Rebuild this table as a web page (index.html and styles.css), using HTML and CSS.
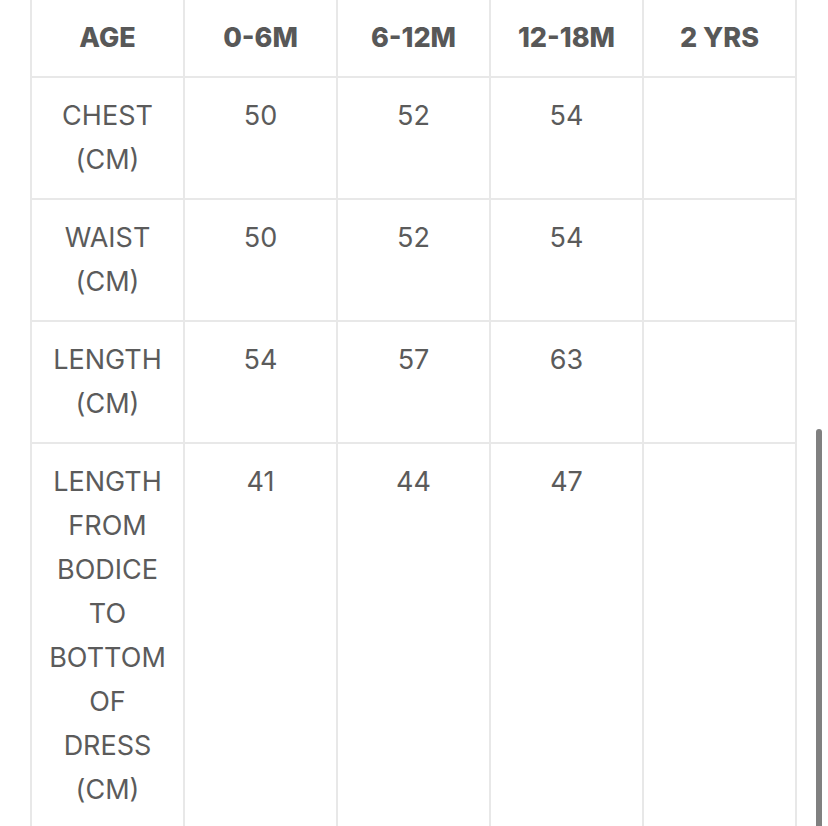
FILE: index.html
```html
<!DOCTYPE html>
<html lang="en">
<head>
<meta charset="utf-8">
<title>Size chart</title>
<link rel="stylesheet" href="styles.css">
</head>
<body>
<div class="wrap">
  <table class="chart">
    <colgroup>
      <col class="c"><col class="c"><col class="c"><col class="c"><col class="c">
    </colgroup>
    <thead>
      <tr><th>AGE</th><th>0-6M</th><th>6-12M</th><th>12-18M</th><th>2 YRS</th></tr>
    </thead>
    <tbody>
      <tr><td>CHEST (CM)</td><td>50</td><td>52</td><td>54</td><td></td></tr>
      <tr><td>WAIST (CM)</td><td>50</td><td>52</td><td>54</td><td></td></tr>
      <tr><td>LENGTH (CM)</td><td>54</td><td>57</td><td>63</td><td></td></tr>
      <tr><td>LENGTH FROM BODICE TO BOTTOM OF DRESS (CM)</td><td>41</td><td>44</td><td>47</td><td></td></tr>
    </tbody>
  </table>
</div>
<div class="scroll-thumb"></div>
</body>
</html>
```

FILE: styles.css
```css
html, body {
  margin: 0;
  padding: 0;
  background: #ffffff;
  overflow: hidden;
}
.wrap {
  padding-left: 30px;
  margin-top: -2px;
}
.chart {
  border-collapse: collapse;
  table-layout: fixed;
  width: 767px;
  font-family: Inter, "Liberation Sans", sans-serif;
  font-size: 27px;
  line-height: 44px;
  color: #5b5b5b;
  border: 2px solid #e8e8e8;
}
.chart .c { width: 153px; }
.chart th, .chart td {
  border: 2px solid #e8e8e8;
  padding: 16px 12px;
  text-align: center;
  vertical-align: top;
}
.chart th {
  font-weight: 800;
  color: #585858;
}
.chart td {
  font-weight: 400;
}
.scroll-thumb {
  position: fixed;
  left: 816px;
  top: 429px;
  width: 6px;
  height: 400px;
  background: #808080;
  border-radius: 3px 3px 0 0;
}
```
